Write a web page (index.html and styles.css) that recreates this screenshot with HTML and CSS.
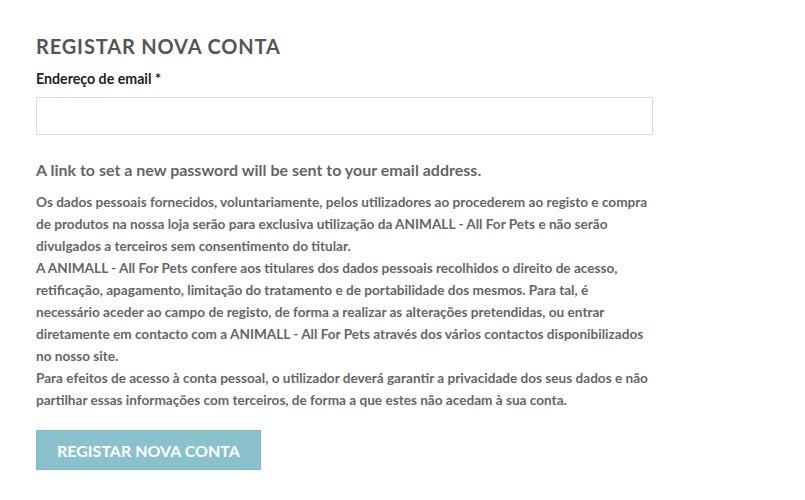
FILE: index.html
```html
<!DOCTYPE html>
<html lang="pt">
<head>
<meta charset="utf-8">
<title>Registar nova conta</title>
<link rel="stylesheet" href="styles.css">
</head>
<body>
<main class="register">
  <h2 class="register__title">REGISTAR NOVA CONTA</h2>
  <form class="register__form">
    <label class="field__label" for="email">Endereço de email <span class="req">*</span></label>
    <input class="field__input" id="email" type="email">
    <p class="register__note">A link to set a new password will be sent to your email address.</p>
    <p class="register__privacy">Os dados pessoais fornecidos, voluntariamente, pelos utilizadores ao procederem ao registo e compra de produtos na nossa loja serão para exclusiva utilização da ANIMALL - All For Pets e não serão divulgados a terceiros sem consentimento do titular.<br>A ANIMALL - All For Pets confere aos titulares dos dados pessoais recolhidos o direito de acesso, retificação, apagamento, limitação do tratamento e de portabilidade dos mesmos. Para tal, é necessário aceder ao campo de registo, de forma a realizar as alterações pretendidas, ou entrar diretamente em contacto com a ANIMALL - All For Pets através dos vários contactos disponibilizados no nosso site.<br>Para efeitos de acesso à conta pessoal, o utilizador deverá garantir a privacidade dos seus dados e não partilhar essas informações com terceiros, de forma a que estes não acedam à sua conta.</p>
    <button class="register__btn" type="button">REGISTAR NOVA CONTA</button>
  </form>
</main>
</body>
</html>
```
FILE: styles.css
```css
* { box-sizing: border-box; }
body {
  margin: 0;
  background: #fff;
  font-family: Lato, "Open Sans", sans-serif;
}
.register {
  width: 617px;
  margin-left: 36px;
  padding-top: 33px;
}
.register__title {
  margin: 0 0 10px;
  font-size: 20px;
  font-weight: 700;
  letter-spacing: 0.85px;
  color: #555;
  line-height: 26px;
}
.register__form {
  display: flex;
  flex-direction: column;
  align-items: flex-start;
}
.field__label {
  font-size: 14.2px;
  font-weight: 700;
  color: #222;
  line-height: 20px;
  margin-bottom: 8px;
}
.field__input {
  width: 100%;
  height: 38px;
  border: 1px solid #ddd;
  background: #fff;
  margin: 0;
}
.register__note {
  margin: 24px 0 10px;
  font-size: 16px;
  font-weight: 700;
  color: #666;
  line-height: 22px;
}
.register__privacy {
  margin: 0 0 19px;
  font-size: 13.6px;
  font-weight: 700;
  color: #666;
  line-height: 22px;
}
.register__btn {
  height: 40px;
  padding: 0 20px;
  border: 1px solid #80b8c4;
  background: #8bc1cc;
  color: #fff;
  font-family: inherit;
  font-size: 16px;
  font-weight: 700;
}
```
